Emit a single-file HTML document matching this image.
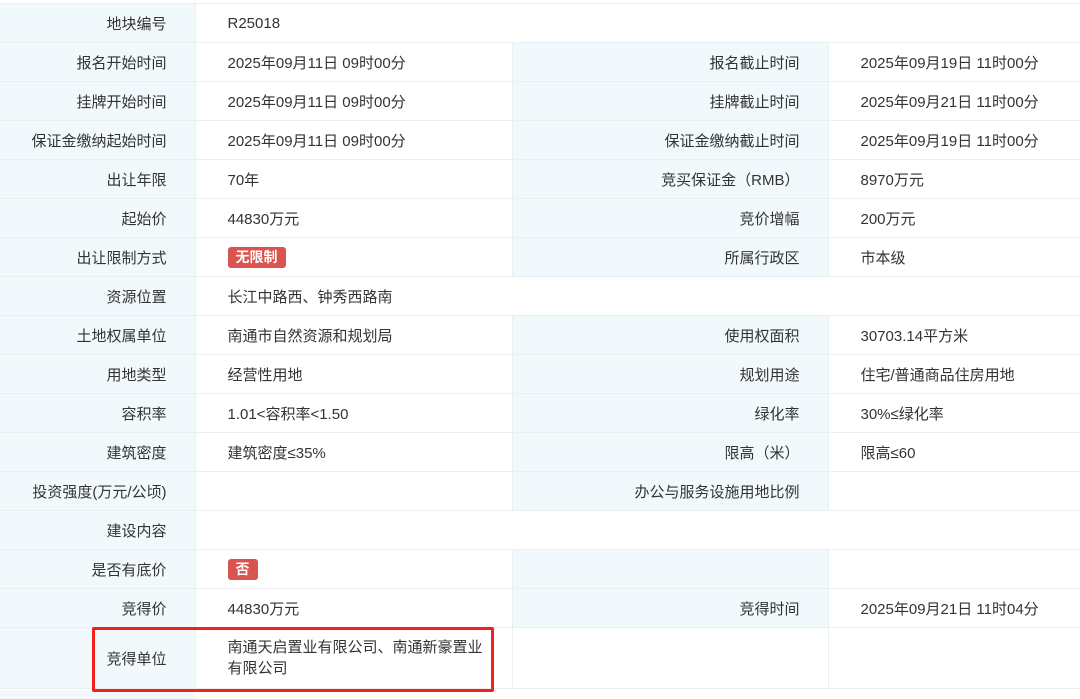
<!DOCTYPE html>
<html><head><meta charset="utf-8"><style>
html,body{margin:0;padding:0;background:#fff;width:1080px;height:699px;overflow:hidden}
body{font-family:"Liberation Sans","Noto Sans CJK SC",sans-serif;font-size:15px;color:#333;position:relative}
table{position:absolute;left:0;top:3px;border-collapse:collapse;table-layout:fixed;width:1080px}
td{height:38px;border:1px solid #eceff2;padding:0;vertical-align:middle;white-space:nowrap}
td.l{background:#f2f9fd;text-align:right;padding-right:28px}
td.v{padding-left:32px}
tr:first-child td{border-top:1px solid #f0f0f0}
td:first-child{border-left:none}
td:last-child{border-right:none}
.tag{display:inline-block;background:#d9534f;color:#fff;font-weight:bold;font-size:14px;line-height:21px;height:21px;padding:0 8px;border-radius:3px;vertical-align:middle}
.box{position:absolute;left:92px;top:627px;width:396px;height:59px;border:3px solid #f0201c;border-radius:2px}
.bottom{position:absolute;left:0;top:690px;width:195px;height:9px;background:#f2f9fd}
</style></head><body>
<table>
<colgroup><col style="width:195px"><col style="width:317px"><col style="width:316px"><col style="width:252px"></colgroup>
<tr><td class="l">地块编号</td><td class="v" colspan="3">R25018</td></tr>
<tr><td class="l">报名开始时间</td><td class="v">2025年09月11日 09时00分</td><td class="l">报名截止时间</td><td class="v">2025年09月19日 11时00分</td></tr>
<tr><td class="l">挂牌开始时间</td><td class="v">2025年09月11日 09时00分</td><td class="l">挂牌截止时间</td><td class="v">2025年09月21日 11时00分</td></tr>
<tr><td class="l">保证金缴纳起始时间</td><td class="v">2025年09月11日 09时00分</td><td class="l">保证金缴纳截止时间</td><td class="v">2025年09月19日 11时00分</td></tr>
<tr><td class="l">出让年限</td><td class="v">70年</td><td class="l">竞买保证金（RMB）</td><td class="v">8970万元</td></tr>
<tr><td class="l">起始价</td><td class="v">44830万元</td><td class="l">竞价增幅</td><td class="v">200万元</td></tr>
<tr><td class="l">出让限制方式</td><td class="v"><span class="tag">无限制</span></td><td class="l">所属行政区</td><td class="v">市本级</td></tr>
<tr><td class="l">资源位置</td><td class="v" colspan="3">长江中路西、钟秀西路南</td></tr>
<tr><td class="l">土地权属单位</td><td class="v">南通市自然资源和规划局</td><td class="l">使用权面积</td><td class="v">30703.14平方米</td></tr>
<tr><td class="l">用地类型</td><td class="v">经营性用地</td><td class="l">规划用途</td><td class="v">住宅/普通商品住房用地</td></tr>
<tr><td class="l">容积率</td><td class="v">1.01&lt;容积率&lt;1.50</td><td class="l">绿化率</td><td class="v">30%≤绿化率</td></tr>
<tr><td class="l">建筑密度</td><td class="v">建筑密度≤35%</td><td class="l">限高（米）</td><td class="v">限高≤60</td></tr>
<tr><td class="l">投资强度(万元/公顷)</td><td class="v"></td><td class="l">办公与服务设施用地比例</td><td class="v"></td></tr>
<tr><td class="l">建设内容</td><td class="v" colspan="3"></td></tr>
<tr><td class="l">是否有底价</td><td class="v"><span class="tag">否</span></td><td class="l"></td><td class="v"></td></tr>
<tr><td class="l">竞得价</td><td class="v">44830万元</td><td class="l">竞得时间</td><td class="v">2025年09月21日 11时04分</td></tr>
<tr><td class="l" style="height:60px">竞得单位</td><td class="v" style="white-space:normal;line-height:21px;padding-right:20px">南通天启置业有限公司、南通新豪置业有限公司</td><td></td><td></td></tr>
</table>
<div class="bottom"></div>
<div class="box"></div>
</body></html>
